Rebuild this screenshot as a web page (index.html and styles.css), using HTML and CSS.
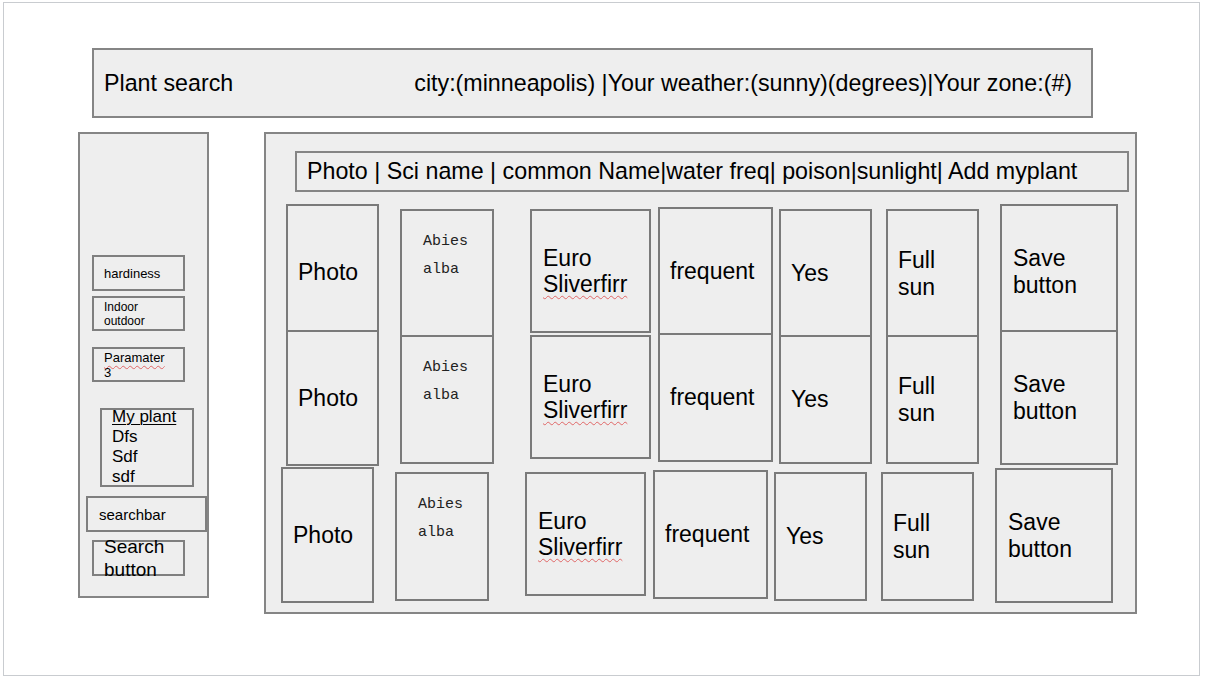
FILE: index.html
```html
<!DOCTYPE html>
<html lang="en">
<head>
<meta charset="utf-8">
<title>Plant search wireframe</title>
<link rel="stylesheet" href="styles.css">
</head>
<body>
<div class="slide">
  <header class="topbar">
    <span class="title">Plant search</span>
    <span class="status">city:(minneapolis) |Your weather:(sunny)(degrees)|Your zone:(#)</span>
  </header>
  <div class="content">
    <aside class="sidebar">
      <div class="box filter f-hard"><div class="txt">hardiness</div></div>
      <div class="box filter f-io"><div class="txt">Indoor<br>outdoor</div></div>
      <div class="box filter f-param"><div class="txt"><span class="spell">Paramater</span><br>3</div></div>
      <div class="box myplants">
        <div class="mp-text"><u>My plant</u><br>Dfs<br>Sdf<br>sdf</div>
      </div>
      <div class="box searchbar"><div class="txt">searchbar</div></div>
      <div class="box searchbtn"><div class="txt">Search<br>button</div></div>
    </aside>
    <main class="panel">
      <div class="colhead">Photo | Sci name | common Name|water freq| poison|sunlight| Add myplant</div>
      <div class="row r1">
        <div class="cell c-photo"><div class="txt">Photo</div></div>
        <div class="cell c-sci"><div class="txt">Abies<br>alba</div></div>
        <div class="cell c-common"><div class="txt">Euro<br><span class="spell">Sliverfirr</span></div></div>
        <div class="cell c-water"><div class="txt">frequent</div></div>
        <div class="cell c-poison"><div class="txt">Yes</div></div>
        <div class="cell c-sun"><div class="txt">Full<br>sun</div></div>
        <div class="cell c-save"><div class="txt">Save<br>button</div></div>
      </div>
      <div class="row r2">
        <div class="cell c-photo"><div class="txt">Photo</div></div>
        <div class="cell c-sci"><div class="txt">Abies<br>alba</div></div>
        <div class="cell c-common"><div class="txt">Euro<br><span class="spell">Sliverfirr</span></div></div>
        <div class="cell c-water"><div class="txt">frequent</div></div>
        <div class="cell c-poison"><div class="txt">Yes</div></div>
        <div class="cell c-sun"><div class="txt">Full<br>sun</div></div>
        <div class="cell c-save"><div class="txt">Save<br>button</div></div>
      </div>
      <div class="row r3">
        <div class="cell c-photo"><div class="txt">Photo</div></div>
        <div class="cell c-sci"><div class="txt">Abies<br>alba</div></div>
        <div class="cell c-common"><div class="txt">Euro<br><span class="spell">Sliverfirr</span></div></div>
        <div class="cell c-water"><div class="txt">frequent</div></div>
        <div class="cell c-poison"><div class="txt">Yes</div></div>
        <div class="cell c-sun"><div class="txt">Full<br>sun</div></div>
        <div class="cell c-save r3-save"><div class="txt">Save<br>button</div></div>
      </div>
    </main>
  </div>
</div>
</body>
</html>
```
FILE: styles.css
```css
* { box-sizing: border-box; }

html, body {
  margin: 0;
  padding: 0;
  background: #ffffff;
}

body {
  font-family: "Liberation Sans", Arial, sans-serif;
  color: #000;
  width: 1207px;
  height: 680px;
  overflow: hidden;
}

.slide {
  margin: 2px 0 0 3px;
  width: 1197px;
  height: 674px;
  border: 1px solid #c9ccd0;
  background: #ffffff;
}

.topbar {
  margin: 45px 0 0 88px;
  width: 1001px;
  height: 70px;
  border: 2px solid #858585;
  background: #eeeeee;
  display: flex;
  align-items: center;
  padding-left: 10px;
  font-size: 23.25px;
  line-height: 1.15;
  gap: 181px;
  white-space: nowrap;
}

.content {
  display: flex;
  align-items: flex-start;
  margin: 14px 0 0 74px;
}

.txt { white-space: nowrap; }

/* Sidebar */
.sidebar {
  width: 131px;
  height: 466px;
  border: 2px solid #858585;
  background: #eeeeee;
  padding-top: 121px;
  display: flex;
  flex-direction: column;
  align-items: flex-start;
}

.box {
  border: 2px solid #7f7f7f;
  background: #eeeeee;
}

.filter {
  width: 93px;
  height: 36px;
  margin-left: 12px;
  display: flex;
  align-items: center;
  padding-left: 10px;
  font-size: 13px;
  line-height: 15px;
}

.f-io {
  height: 35px;
  margin-top: 5px;
  font-size: 12px;
  line-height: 14px;
}

.f-param {
  height: 35px;
  margin-top: 16px;
}

.spell {
  text-decoration: underline wavy #e06666;
  text-decoration-thickness: 1px;
  text-underline-offset: 3px;
  text-decoration-skip-ink: none;
}

.myplants {
  width: 94px;
  height: 79px;
  margin: 26px 0 0 20px;
  padding-left: 10px;
  font-size: 17px;
  line-height: 20px;
}

.mp-text {
  margin-top: -3px;
}

.mp-text u {
  text-decoration-thickness: 1px;
  text-underline-offset: 2px;
}

.searchbar {
  width: 121px;
  height: 36px;
  margin: 9px 0 0 6px;
  padding-left: 11px;
  display: flex;
  align-items: center;
  font-size: 15px;
}

.searchbtn {
  width: 93px;
  height: 36px;
  margin: 8px 0 0 12px;
  padding-left: 10px;
  display: flex;
  align-items: center;
  font-size: 19px;
  line-height: 23px;
}

/* Main panel */
.panel {
  margin-left: 55px;
  width: 873px;
  height: 482px;
  border: 2px solid #858585;
  background: #eeeeee;
  padding-top: 17px;
}

.colhead {
  margin-left: 29px;
  width: 834px;
  height: 41px;
  border: 2px solid #858585;
  display: flex;
  align-items: center;
  padding-left: 10px;
  font-size: 23.25px;
  white-space: nowrap;
}

.row {
  display: flex;
  align-items: flex-start;
  padding-left: 20px;
}

.r1 { margin-top: 12px; height: 126px; }
.r2 { height: 137px; }
.r3 { margin-left: -5px; height: 136px; }

.cell {
  flex: none;
  border: 2px solid #7a7a7a;
  background: #eeeeee;
  display: flex;
  align-items: center;
  padding-left: 9px;
  font-size: 23px;
  line-height: 26.5px;
}

.c-photo  { width: 93px;  height: 136px; padding-left: 10px; }
.c-sci    { width: 94px;  height: 129px; margin: 5px 0 0 21px; align-items: flex-start; padding: 17px 0 0 21px;
            font-family: "Liberation Mono", "Courier New", monospace; font-size: 15px; line-height: 28px; color: #222; }
.c-common { width: 121px; height: 124px; margin: 5px 0 0 36px; padding-left: 11px; }
.c-water  { width: 115px; height: 129px; margin: 3px 0 0 7px; padding-left: 10px; }
.c-poison { width: 93px;  height: 129px; margin: 5px 0 0 6px; padding-left: 10px; }
.c-sun    { width: 93px;  height: 129px; margin: 5px 0 0 14px; padding-left: 10px; }
.c-save   { width: 118px; height: 135px; margin: 0 0 0 21px; padding-left: 11px; }
.r3-save  { margin-top: 1px; }
```
